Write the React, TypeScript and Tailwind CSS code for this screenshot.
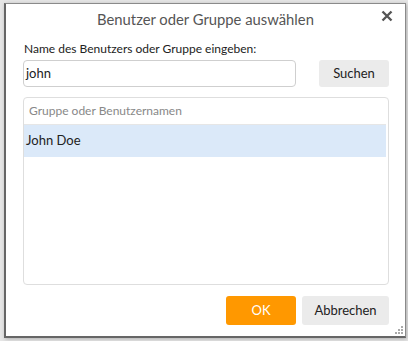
import React from "react";

export default function App() {
  const font = { fontFamily: 'Lato, "Noto Sans", sans-serif' };
  return (
    <div className="w-[408px] h-[341px] bg-[#e6e6e6] pt-[3px] pl-[4px]" style={font}>
      <div className="relative w-[402px] h-[335px] bg-white border border-[#8a8a8a] border-l-[2px] border-b-[2px] border-l-[#666] border-b-[#666] shadow-[1px_1px_4px_rgba(0,0,0,0.25)] flex flex-col">
        <div className="relative h-[31px] flex items-center justify-center">
          <span className="text-[14.8px] text-[#555]">Benutzer oder Gruppe auswählen</span>
          <span className="absolute right-[12px] top-[6px]">
            <svg width="12" height="12" viewBox="0 0 12 12">
              <path d="M1.5 1.5 L10.5 10.5 M10.5 1.5 L1.5 10.5" stroke="#555" strokeWidth="2.4" strokeLinecap="butt" />
            </svg>
          </span>
        </div>
        <div className="pl-[17px] pr-[16px] flex flex-col">
          <div className="text-[12px] text-[#222] leading-[16px] mt-[6px] pl-[1px]">Name des Benutzers oder Gruppe eingeben:</div>
          <div className="flex items-center mt-[3px]">
            <div className="w-[273px] h-[27px] border border-[#cfcfcf] rounded-[4px] flex items-center pl-[2px] text-[13px] text-[#222]">john</div>
            <div className="flex-1" />
            <div className="w-[70px] h-[27px] bg-[#ebebeb] rounded-[3px] flex items-center justify-center text-[13px] text-[#222]">Suchen</div>
          </div>
          <div className="mt-[10px] h-[188px] border border-[#dedede] rounded-[4px] flex flex-col pr-[2px]">
            <div className="h-[27px] flex items-center pl-[5px] text-[12px] text-[#888] border-b border-[#e6e6e6]">Gruppe oder Benutzernamen</div>
            <div className="h-[32px] bg-[#dbe9f9] flex items-center pl-[2px] text-[13px] text-[#222]">John Doe</div>
          </div>
          <div className="flex justify-end gap-[6px] mt-[11px]">
            <div className="w-[70px] h-[29px] bg-[#ff9800] rounded-[3px] flex items-center justify-center text-[13px] text-white">OK</div>
            <div className="w-[87px] h-[29px] bg-[#ebebeb] rounded-[3px] flex items-center justify-center text-[13px] text-[#222]">Abbrechen</div>
          </div>
        </div>
        <svg className="absolute right-[2px] bottom-[2px]" width="8" height="8" viewBox="0 0 8 8">
          <rect x="6" y="0" width="2" height="2" fill="#aaa" />
          <rect x="3" y="3" width="2" height="2" fill="#aaa" />
          <rect x="6" y="3" width="2" height="2" fill="#aaa" />
          <rect x="0" y="6" width="2" height="2" fill="#aaa" />
          <rect x="3" y="6" width="2" height="2" fill="#aaa" />
          <rect x="6" y="6" width="2" height="2" fill="#aaa" />
        </svg>
      </div>
    </div>
  );
}
